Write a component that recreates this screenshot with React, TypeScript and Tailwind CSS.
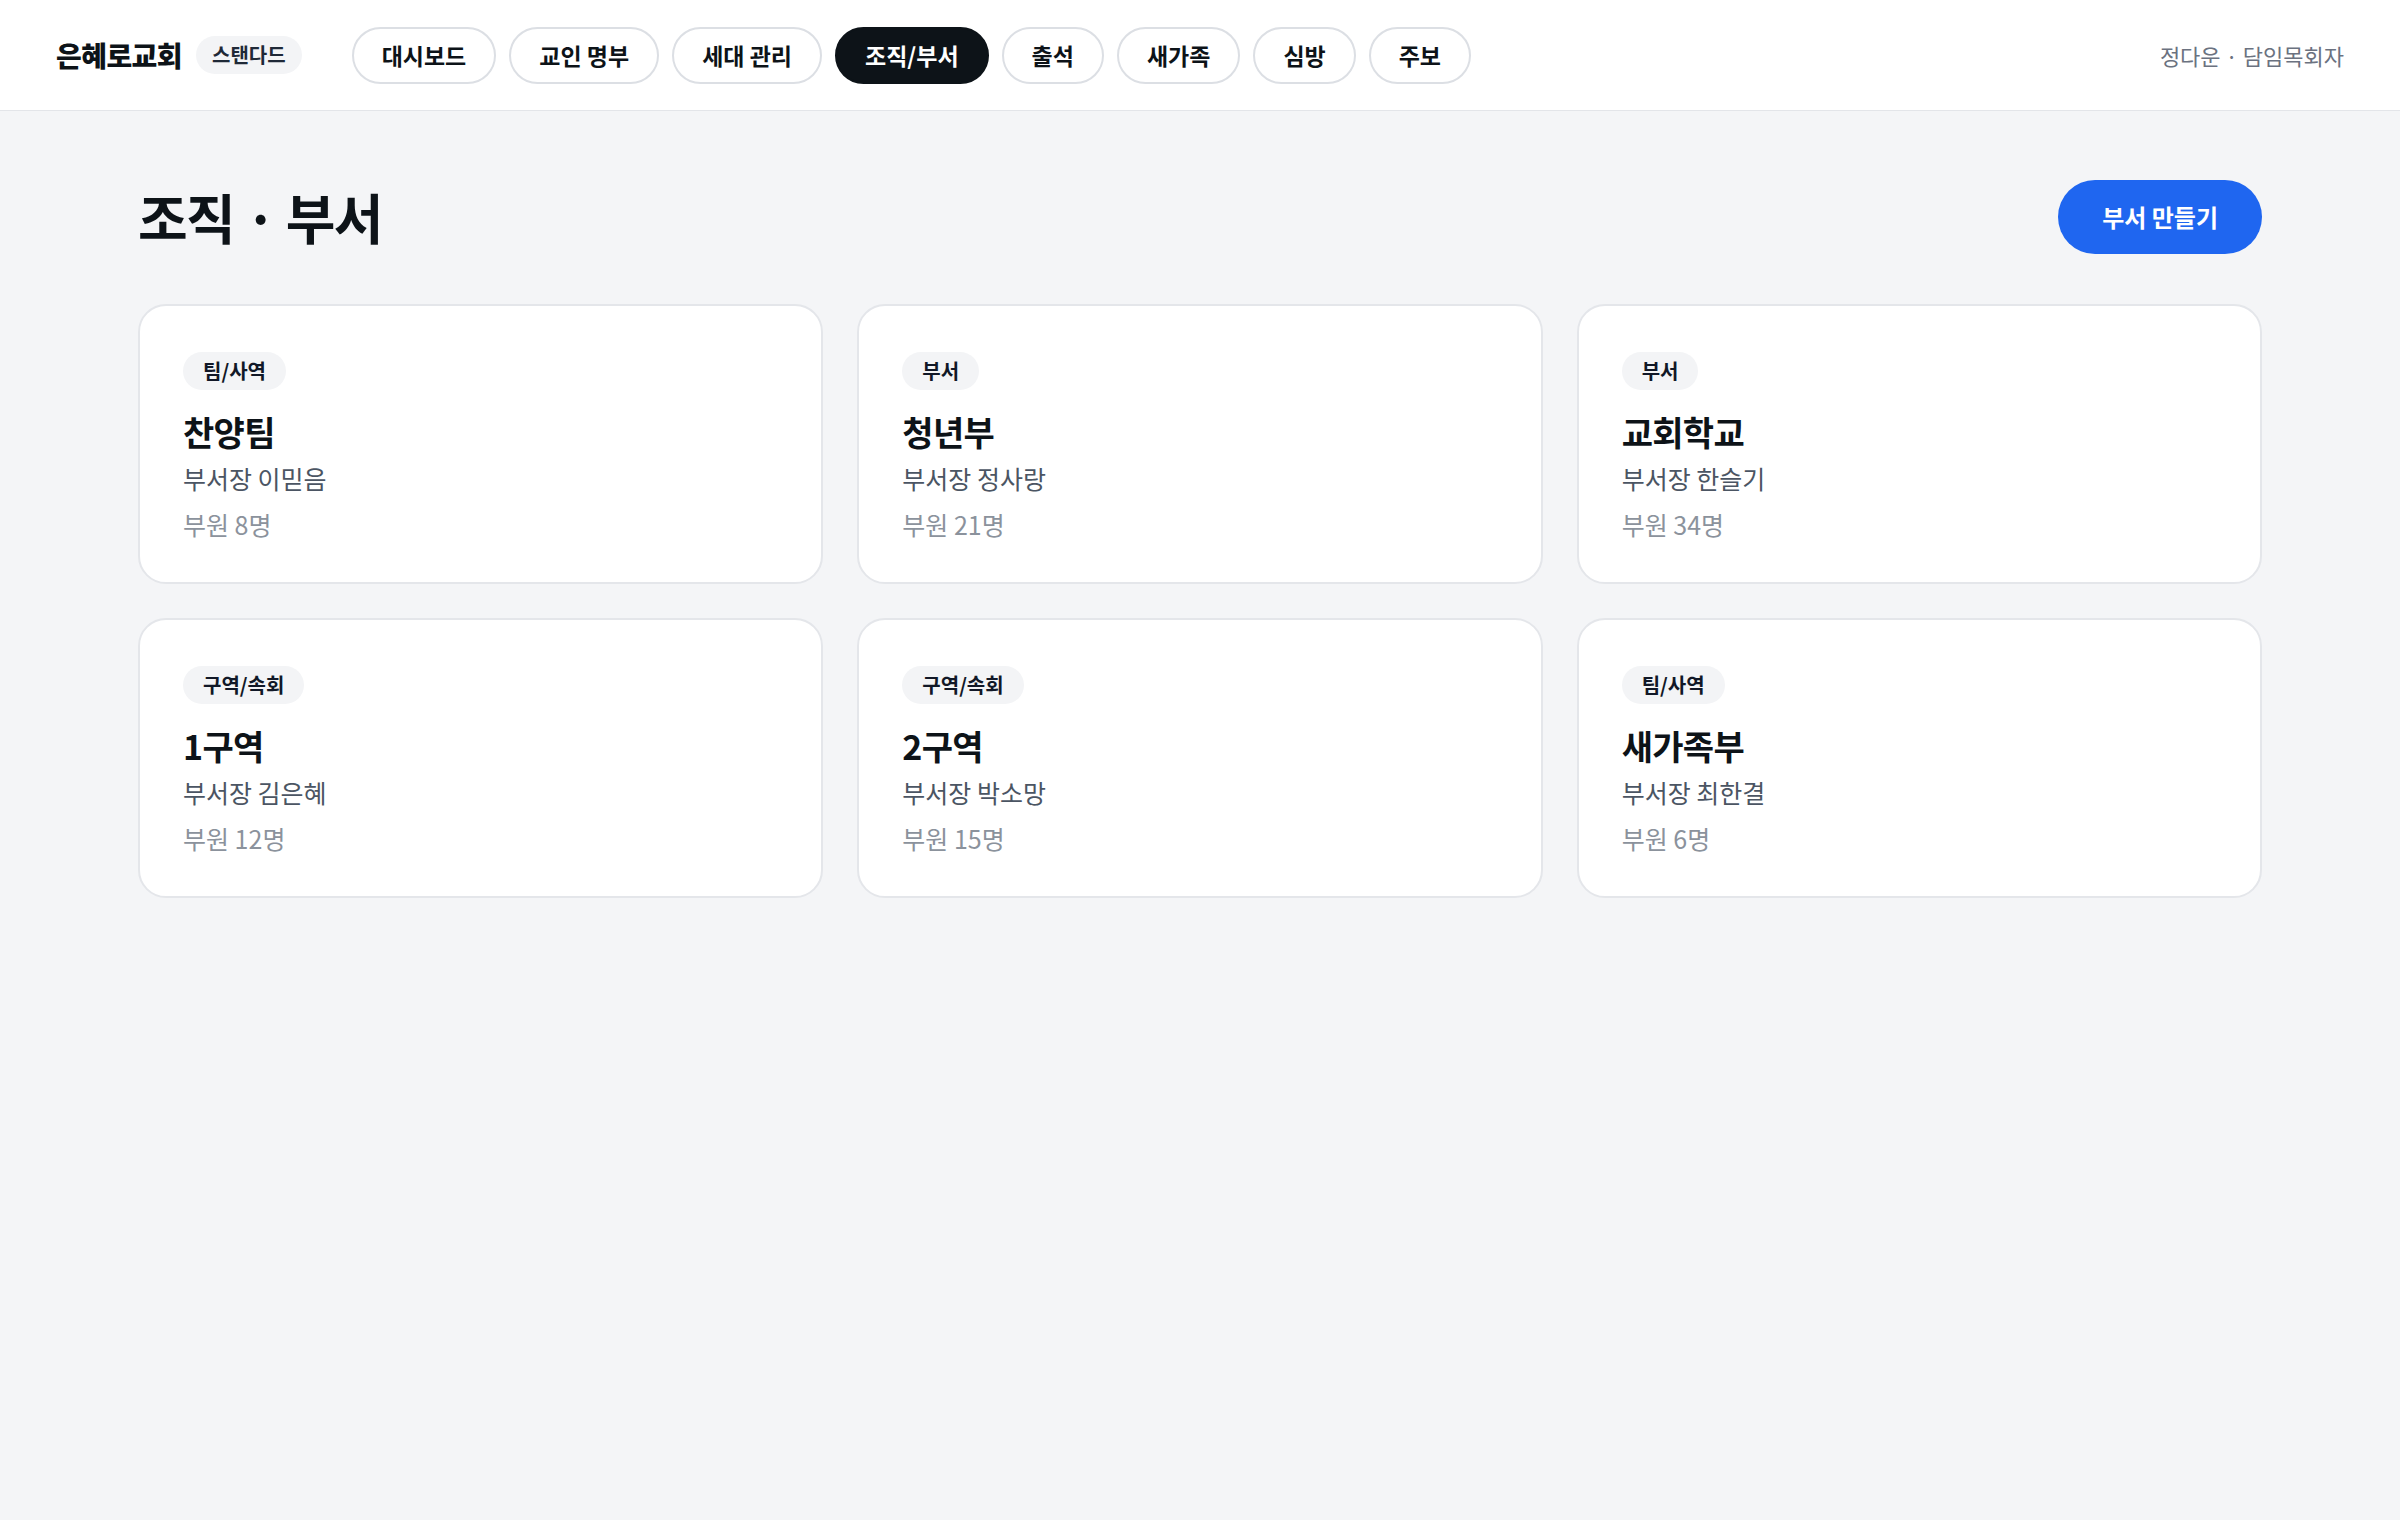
import { useState } from 'react'

interface Dept {
  id: number
  kind: string
  name: string
  leader: string
  members: number
}

const navItems = ['대시보드', '교인 명부', '세대 관리', '조직/부서', '출석', '새가족', '심방', '주보']

const depts: Dept[] = [
  { id: 1, kind: '팀/사역', name: '찬양팀', leader: '이믿음', members: 8 },
  { id: 2, kind: '부서', name: '청년부', leader: '정사랑', members: 21 },
  { id: 3, kind: '부서', name: '교회학교', leader: '한슬기', members: 34 },
  { id: 4, kind: '구역/속회', name: '1구역', leader: '김은혜', members: 12 },
  { id: 5, kind: '구역/속회', name: '2구역', leader: '박소망', members: 15 },
  { id: 6, kind: '팀/사역', name: '새가족부', leader: '최한결', members: 6 },
]

export default function App() {
  const [active, setActive] = useState('조직/부서')

  return (
    <div className="min-h-screen bg-[#f4f5f7] font-['Noto_Sans_CJK_KR','Noto_Sans',sans-serif] text-[#0d1318]">
      {/* Header */}
      <header className="h-[111px] bg-white border-b border-[#e3e5e9] px-[56px] flex items-center justify-between">
        <div className="flex items-center">
          <span className="text-[28px] font-extrabold tracking-[-0.02em]">은혜로교회</span>
          <span className="ml-[14px] h-[38px] px-[16px] inline-flex items-center rounded-full bg-[#f3f4f6] text-[20px] font-semibold text-[#1f2937]">
            스탠다드
          </span>
          <nav className="ml-[50px] flex items-center gap-[13px]">
            {navItems.map(item => (
              <button
                key={item}
                onClick={() => setActive(item)}
                className={`h-[57px] px-[28px] rounded-full border-2 text-[23px] font-bold leading-none ${
                  active === item
                    ? 'bg-[#0d1318] border-[#0d1318] text-white'
                    : 'bg-white border-[#dcdfe4] text-[#0d1318]'
                }`}
              >
                {item}
              </button>
            ))}
          </nav>
        </div>
        <span className="text-[22px] text-[#6b7280]">정다운 · 담임목회자</span>
      </header>

      <main className="px-[138px] pt-[69px] pb-20">
        <div className="flex items-center justify-between mb-[50px]">
          <h1 className="text-[54px] font-bold tracking-[-0.03em] leading-none">조직 · 부서</h1>
          <button className="h-[74px] px-[44px] rounded-full bg-[#1f66f0] text-white text-[24px] font-bold">
            부서 만들기
          </button>
        </div>

        <div className="grid grid-cols-3 gap-[34px]">
          {depts.map(d => (
            <div key={d.id} className="bg-white rounded-[28px] border-2 border-[#e4e6ea] px-[43px] pt-[46px] pb-[41px]">
              <span className="inline-flex items-center h-[38px] px-[20px] rounded-full bg-[#f3f4f6] text-[20px] font-semibold text-[#111827]">
                {d.kind}
              </span>
              <p className="mt-[21px] text-[34px] font-bold leading-[42px] tracking-[-0.02em]">{d.name}</p>
              <p className="mt-[8px] text-[25px] leading-[34px] text-[#4b5563]">부서장 {d.leader}</p>
              <p className="mt-[12px] text-[25px] leading-[34px] text-[#8b929c]">부원 {d.members}명</p>
            </div>
          ))}
        </div>
      </main>
    </div>
  )
}
